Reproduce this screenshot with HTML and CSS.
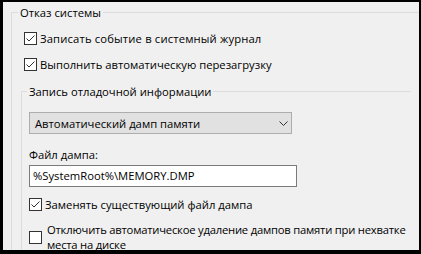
FILE: index.html
```html
<!DOCTYPE html>
<html lang="ru">
<head>
<meta charset="utf-8">
<link rel="stylesheet" href="styles.css">
</head>
<body>
<div class="panel">
  <div class="group group-outer">
    <div class="legend">Отказ системы</div>
    <label class="check check-1">
      <span class="box"><svg viewBox="0 0 11 11" width="11" height="11"><path d="M1.5 5.5 L4 8 L9.5 2.5" fill="none" stroke="#333" stroke-width="1"/></svg></span>
      <span class="text">Записать событие в системный журнал</span>
    </label>
    <label class="check check-2">
      <span class="box"><svg viewBox="0 0 11 11" width="11" height="11"><path d="M1.5 5.5 L4 8 L9.5 2.5" fill="none" stroke="#333" stroke-width="1"/></svg></span>
      <span class="text">Выполнить автоматическую перезагрузку</span>
    </label>
    <div class="group group-inner">
      <div class="legend legend-inner">Запись отладочной информации</div>
      <div class="select">
        <span class="select-text">Автоматический дамп памяти</span>
        <svg class="chev" viewBox="0 0 9 5" width="9" height="5"><path d="M0.5 0.5 L4.5 4.5 L8.5 0.5" fill="none" stroke="#333" stroke-width="1"/></svg>
      </div>
      <div class="field-label">Файл дампа:</div>
      <div class="input">%SystemRoot%\MEMORY.DMP</div>
      <label class="check check-3">
        <span class="box"><svg viewBox="0 0 11 11" width="11" height="11"><path d="M1.5 5.5 L4 8 L9.5 2.5" fill="none" stroke="#333" stroke-width="1"/></svg></span>
        <span class="text">Заменять существующий файл дампа</span>
      </label>
      <label class="check check-4">
        <span class="box"></span>
        <span class="text text-wrap">Отключить автоматическое удаление дампов памяти при нехватке места на диске</span>
      </label>
    </div>
  </div>
</div>
</body>
</html>
```

FILE: styles.css
```css
html, body {
  margin: 0;
  padding: 0;
}
body {
  background: #000;
  width: 421px;
  height: 254px;
  overflow: hidden;
  font-family: "Open Sans", "Noto Sans", sans-serif;
  font-size: 11.25px;
  line-height: 15px;
  color: #000;
}
.panel {
  margin: 2px 2px 0 3px;
  height: 248px;
  background: #f0f0f0;
  overflow: hidden;
  padding: 10px 0 0 8px;
  box-sizing: border-box;
}
.group {
  border: 1px solid #dcdcdc;
}
.group-outer {
  width: 440px;
  height: 300px;
  box-sizing: border-box;
}
.legend {
  display: block;
  width: max-content;
  margin: -8px 0 0 6px;
  padding: 0 2px;
  background: #f0f0f0;
  line-height: 16px;
  height: 16px;
}
.check {
  display: flex;
  align-items: center;
  line-height: 15px;
}
.box {
  flex: none;
  width: 13px;
  height: 13px;
  box-sizing: border-box;
  border: 1px solid #333;
  background: #fff;
  display: flex;
  align-items: center;
  justify-content: center;
  margin-right: 3px;
}
.box svg {
  display: block;
}
.check-1 {
  margin: 9px 0 0 12px;
  height: 17px;
}
.check-1 .text {
  letter-spacing: 0.15px;
}
.check-2 {
  margin: 9px 0 0 12px;
  height: 17px;
}
.group-inner {
  width: 390px;
  box-sizing: border-box;
  border-right: none;
  border-bottom: none;
  margin: 18px 0 0 9px;
  height: 200px;
}
.legend-inner {
  margin-left: 5px;
}
.select {
  margin: 12px 0 0 7px;
  width: 263px;
  height: 22px;
  box-sizing: border-box;
  border: 1px solid #adadad;
  background: #e1e1e1;
  display: flex;
  align-items: center;
  justify-content: space-between;
  padding: 0 3px 0 5px;
}
.chev {
  display: block;
}
.field-label {
  margin: 13px 0 0 7px;
  line-height: 16px;
}
.input {
  margin: 2px 0 0 7px;
  width: 268px;
  height: 22px;
  box-sizing: border-box;
  border: 1px solid #7a7a7a;
  background: #fff;
  padding: 0 3px;
  line-height: 20px;
}
.check-3 {
  margin: 9px 0 0 7px;
  height: 17px;
}
.check-4 {
  margin: 9px 0 0 7px;
}
.check-4 .box {
  margin-right: 5px;
}
.text-wrap {
  flex: none;
  width: 362px;
  letter-spacing: -0.22px;
}
```
